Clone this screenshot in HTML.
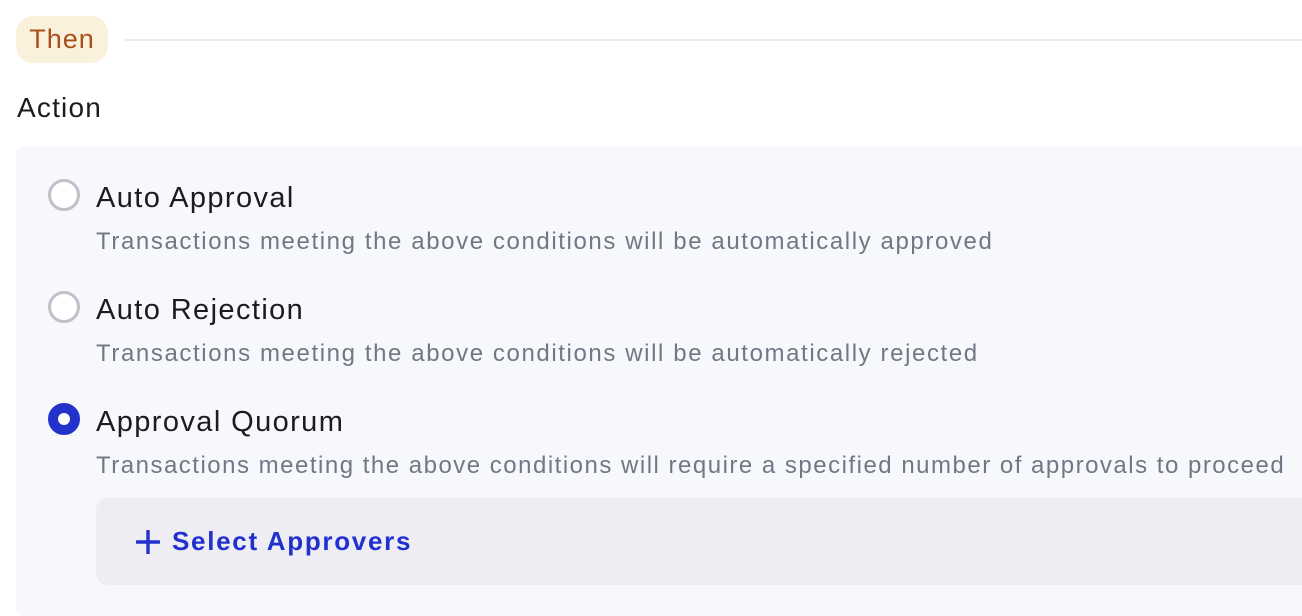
<!DOCTYPE html>
<html><head><meta charset="utf-8"><style>
body{margin:0;width:1302px;height:602px;background:#fff;font-family:"Liberation Sans",sans-serif;overflow:hidden;position:relative}
.pill{position:absolute;left:16px;top:16px;width:92px;height:47px;border-radius:17px;background:#faf1dc;color:#a84f1c;font-size:27px;line-height:47px;text-align:center;letter-spacing:1px}
.line{position:absolute;left:125px;right:0;top:39px;height:2px;background:#ececf3}
.action{position:absolute;left:17px;top:92px;font-size:28px;color:#1c1c1f;letter-spacing:1.2px}
.panel{position:absolute;left:16px;top:146px;width:1300px;height:470px;background:#f7f8fc;border-radius:8px}
.radio{position:absolute;left:48px;width:26px;height:26px;border:3px solid #bfc0c8;border-radius:50%;background:#fff}
.radio.sel{border:10px solid #2233cc;width:12px;height:12px}
.t{position:absolute;left:96px;font-size:29px;color:#1c1c1f;letter-spacing:1.4px;line-height:32px}
.d{position:absolute;left:96px;font-size:24px;color:#737785;letter-spacing:1.6px;line-height:26px;white-space:nowrap}
.btn{position:absolute;left:96px;top:498px;width:1220px;height:87px;background:#ededf3;border-radius:12px}
.btn span{position:absolute;left:76px;top:27px;font-size:26px;font-weight:bold;color:#2230d0;letter-spacing:1.7px;line-height:32px}
.plus{position:absolute;left:40px;top:32px;width:24px;height:24px}
</style></head><body>
<div class="pill">Then</div><div class="line"></div>
<div class="action">Action</div>
<div class="panel"></div>
<div class="radio" style="top:179px"></div>
<div class="t" style="top:182px">Auto Approval</div>
<div class="d" style="top:229px">Transactions meeting the above conditions will be automatically approved</div>
<div class="radio" style="top:291px"></div>
<div class="t" style="top:294px">Auto Rejection</div>
<div class="d" style="top:341px">Transactions meeting the above conditions will be automatically rejected</div>
<div class="radio sel" style="top:403px"></div>
<div class="t" style="top:406px">Approval Quorum</div>
<div class="d" style="top:453px;letter-spacing:1.5px">Transactions meeting the above conditions will require a specified number of approvals to proceed</div>
<div class="btn"><svg class="plus" viewBox="0 0 24 24"><path d="M12 1v22M1 12h22" stroke="#2230d0" stroke-width="3.4" stroke-linecap="round"/></svg><span>Select Approvers</span></div>
</body></html>
